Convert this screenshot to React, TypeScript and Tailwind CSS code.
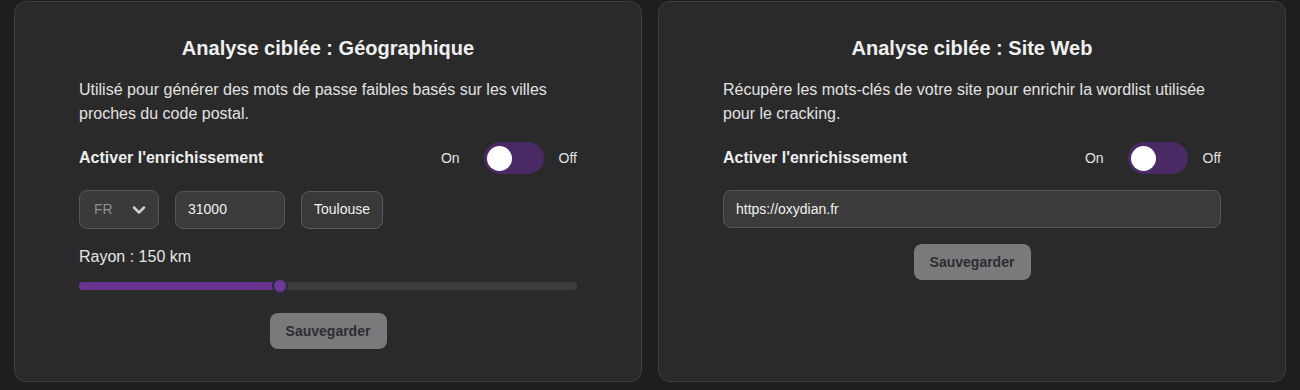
import { ChevronDown } from "lucide-react";

function Toggle() {
  return (
    <div className="flex items-center text-[14px] text-[#e2e2e2]">
      <span>On</span>
      <div className="ml-[24px] mr-[15px] flex h-[32px] w-[60px] items-center rounded-full bg-[#4b2965] pl-[3px]">
        <div className="h-[25px] w-[25px] rounded-full bg-white" />
      </div>
      <span>Off</span>
    </div>
  );
}

function SaveButton() {
  return (
    <div className="flex justify-center">
      <button className="h-[36px] w-[117px] rounded-[8px] bg-[#7a7a7a] text-[14px] font-bold text-[#2c2c36]">
        Sauvegarder
      </button>
    </div>
  );
}

function Card({ title, desc, children }: { title: string; desc: string; children: React.ReactNode }) {
  return (
    <div className="rounded-[12px] border border-[#3e3e3e] bg-[#2a2a2a] px-16 pt-8 pb-8">
      <h2 className="text-center text-[20px] leading-[28px] font-bold text-[#f0f0f0]">{title}</h2>
      <p className="mt-4 text-[16px] leading-[24px] text-[#e2e2e2]">{desc}</p>
      <div className="mt-4 flex h-[32px] items-center justify-between">
        <span className="text-[16px] font-bold text-[#eeeeee]">Activer l'enrichissement</span>
        <Toggle />
      </div>
      {children}
    </div>
  );
}

export default function App() {
  const pct = 40.4;
  return (
    <div
      className="min-h-[390px] bg-[#1e1e1e] px-[14px] pt-px"
      style={{ fontFamily: '"Liberation Sans", Arial, sans-serif' }}
    >
      <div className="grid grid-cols-2 gap-4">
        <Card
          title="Analyse ciblée : Géographique"
          desc="Utilisé pour générer des mots de passe faibles basés sur les villes proches du code postal."
        >
          <div className="mt-4 flex items-center gap-4">
            <div className="flex h-[39px] w-[80px] items-center justify-between rounded-[8px] border border-[#555555] bg-[#3a3a3a] pl-[14px] pr-[9px]">
              <span className="text-[14px] text-[#8e8e8e]">FR</span>
              <ChevronDown size={20} strokeWidth={3} className="text-[#cfcfcf]" />
            </div>
            <div className="flex h-[38px] w-[110px] items-center rounded-[8px] border border-[#555555] bg-[#3b3b3b] px-3 text-[14px] text-[#f0f0f0]">
              31000
            </div>
            <div className="flex h-[38px] items-center rounded-[8px] border border-[#5a5a5a] bg-[#393939] px-3 text-[14px] text-[#f0f0f0]">
              Toulouse
            </div>
          </div>
          <div className="mt-4 text-[16px] leading-[24px] text-[#e6e6e6]">Rayon : 150 km</div>
          <div className="relative mt-[9px] flex h-4 items-center">
            <div className="h-2 w-full rounded-full bg-[#3d3d3f]">
              <div className="h-2 rounded-full bg-[#6a3590]" style={{ width: `${pct}%` }} />
            </div>
            <div
              className="absolute top-1/2 h-[16px] w-[16px] -translate-x-1/2 -translate-y-1/2 rounded-full border-2 border-[#2b2b3a] bg-[#6b3a96]"
              style={{ left: `${pct}%` }}
            />
          </div>
          <div className="mt-[19px]">
            <SaveButton />
          </div>
        </Card>
        <Card
          title="Analyse ciblée : Site Web"
          desc="Récupère les mots-clés de votre site pour enrichir la wordlist utilisée pour le cracking."
        >
          <div className="mt-4 flex h-[38px] items-center rounded-[8px] border border-[#555555] bg-[#3b3b3b] px-3 text-[14px] text-[#f0f0f0]">
            https://oxydian.fr
          </div>
          <div className="mt-4">
            <SaveButton />
          </div>
        </Card>
      </div>
    </div>
  );
}
